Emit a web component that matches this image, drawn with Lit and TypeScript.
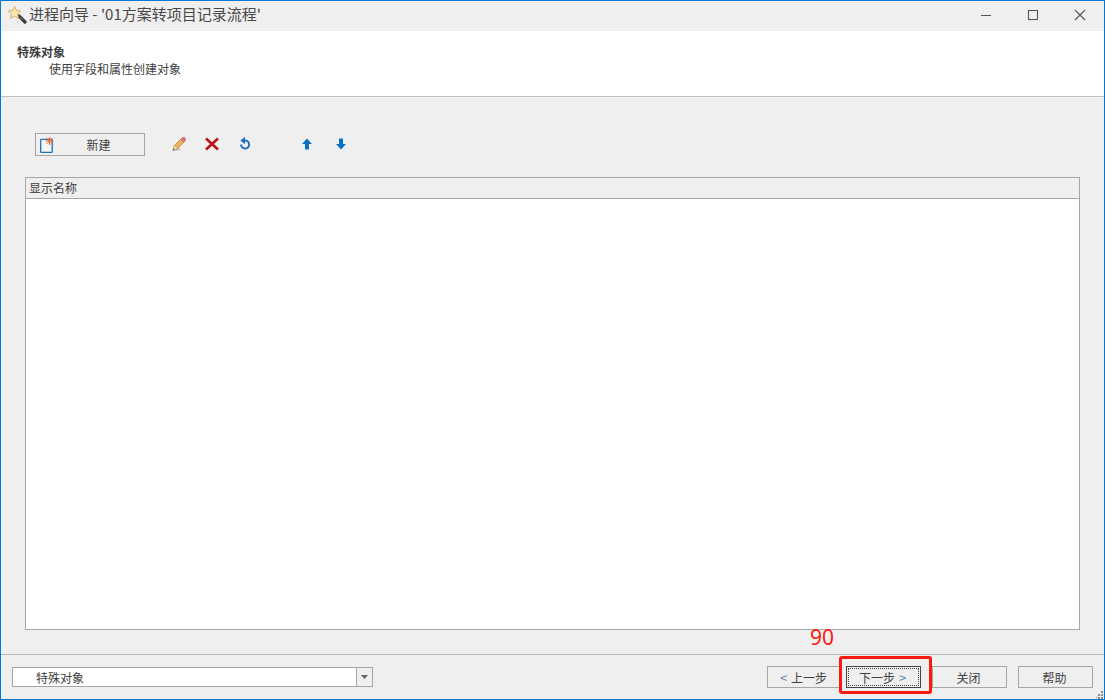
import { LitElement, html, css } from "lit";
import { customElement } from "lit/decorators.js";

@customElement("app-root")
export class AppRoot extends LitElement {
  static styles = css`
    :host { display: block; width: 1105px; height: 700px; }
    * { box-sizing: border-box; }
    .win {
      position: relative; width: 1105px; height: 700px; display: flex; flex-direction: column;
      border: 1px solid #0078d7; background: #efefef; overflow: hidden;
      font-family: "Noto Sans CJK SC", "Liberation Sans", sans-serif; font-size: 12px; color: #404040;
    }
    .title { height: 30px; flex: none; display: flex; align-items: center; padding-left: 7px; }
    .title svg.app { margin-right: 2px; margin-top: -2px; }
    .title .t { font-size: 15px; color: #484848; flex: 1; white-space: nowrap; padding-bottom: 5px; }
    .ctl { width: 47px; height: 30px; display: flex; align-items: center; justify-content: center; padding-bottom: 2px; padding-right: 2px; }
    .hdr { height: 66px; flex: none; background: #fff; border-bottom: 1px solid #c0c0c0; padding: 13px 0 0 16px; }
    .hdr b { display: block; font-size: 12px; font-weight: 700; color: #3a3a3a; line-height: 15px; }
    .hdr span { display: block; margin-left: 32px; line-height: 18px; margin-top: 1px; }
    .main { flex: 1; display: flex; flex-direction: column; padding: 36px 24px 24px 24px; min-height: 0; }
    .bar { display: flex; align-items: center; height: 23px; margin-left: 10px; }
    .new { width: 110px; height: 23px; border: 1px solid #a6a6a6; display: flex; align-items: center; padding-left: 4px; }
    .new span { flex: 1; text-align: center; padding-right: 2px; }
    .ic { width: 16px; height: 16px; display: block; flex: none; margin-top: -2px; }
    .ic.pg { width: 15px; margin-top: 0; }
    .i1 { margin-left: 26px; }
    .i2 { margin-left: 17px; }
    .i3 { margin-left: 46px; }
    .i4 { margin-left: 18px; }
    .list { flex: 1; margin-top: 21px; border: 1px solid #a6a6a6; background: #fff; display: flex; flex-direction: column; }
    .lh { height: 21px; background: #efefef; border-bottom: 1px solid #a6a6a6; padding-left: 3px; line-height: 20px; }
    .foot { height: 45px; flex: none; border-top: 1px solid #b9b9b9; display: flex; align-items: flex-start; padding: 12px 11px 0 11px; }
    .combo { width: 361px; height: 20px; border: 1px solid #a6a6a6; background: #fff; display: flex; }
    .combo span { flex: 1; padding-left: 23px; line-height: 20px; }
    .arrow { width: 16px; border-left: 1px solid #a6a6a6; background: #efefef; display: flex; align-items: center; justify-content: center; }
    .sp { flex: 1; }
    .btn { width: 75px; height: 22px; border: 1px solid #a6a6a6; background: #efefef; display: flex; align-items: center; justify-content: center; white-space: pre; margin-top: -1px; line-height: 21px; padding-right: 2px; }
    .btn.def { border-color: #444; padding: 1px; margin-left: 4px; margin-right: 11px; }
    .btn.def i { flex: 1; align-self: stretch; border: 1px dotted #444; font-style: normal; display: flex; align-items: center; justify-content: center; white-space: pre; padding-right: 2px; }
    .gt { color: #5f86ad; font-size: 13px; }
    .gt.l { margin-right: 4px; }
    .gt.r { margin-left: 4px; }
    .m { margin-left: 11px; }
    .mark { position: absolute; left: 838px; top: 655px; width: 93px; height: 38px; border: 3px solid #fb1a10; border-radius: 3px; }
    .num { position: absolute; left: 809px; top: 622px; font-family: "Noto Sans", sans-serif; font-size: 21px; line-height: 28px; color: #fb1a10; }
    .grip { position: absolute; right: 0; bottom: 0; }
  `;

  render() {
    return html`<div class="win">
      <div class="title">
        <svg class="app" width="19" height="18" viewBox="0 0 19 18">
          <path d="M11 10l6 6" stroke="#3a3a3a" stroke-width="3.200" stroke-linecap="round"/>
          <path d="M12.500 11.500l2 2" stroke="#9a9a9a" stroke-width="1"/>
          <path d="M6.500 .6l1.900 3.800 4.300.6-3.100 3 .8 4.300-3.900-2-3.900 2 .8-4.300-3.100-3 4.300-.6z" fill="#f6e8ae" stroke="#dcb06a" stroke-width="1"/>
        </svg>
        <div class="t">进程向导 - '01方案转项目记录流程'</div>
        <div class="ctl"><svg width="12" height="12"><path d="M1 6.500h10" stroke="#555"/></svg></div>
        <div class="ctl"><svg width="12" height="12"><rect x="1.500" y="1.500" width="9" height="9" fill="none" stroke="#555" stroke-width="1.100"/></svg></div>
        <div class="ctl"><svg width="12" height="12"><path d="M1 1l10 10M11 1L1 11" stroke="#555" stroke-width="1.100"/></svg></div>
      </div>
      <div class="hdr"><b>特殊对象</b><span>使用字段和属性创建对象</span></div>
      <div class="main">
        <div class="bar">
          <div class="new">
            <svg class="ic pg" viewBox="0 0 15 16">
              <rect x=".7" y="3" width="11.500" height="13" rx=".6" fill="#f4f4f4" stroke="#1a74b8" stroke-width="1.300" transform="translate(0,-.6)"/>
              <path d="M9.500 0v8M5.500 4h8M6.700 1.200l5.600 5.600M12.300 1.200L6.700 6.800" stroke="#f4622a" stroke-width="1"/>
            </svg>
            <span>新建</span>
          </div>
          <svg class="ic i1" viewBox="0 0 16 16">
            <path d="M1 15.500l10-2-7-3z" fill="#999" opacity=".55"/>
            <path d="M2 14l1-4 8-8 3 3-8 8z" fill="#eeb25a" stroke="#a87a34" stroke-width=".7"/>
            <path d="M2 14l1-4 3 3z" fill="#f4e0b8"/><path d="M2 14l.5-1.800 1.300 1.300z" fill="#333"/>
            <circle cx="12.600" cy="3.400" r="2.300" fill="#d9707a"/>
          </svg>
          <svg class="ic i2" viewBox="0 0 16 16">
            <path d="M2 2.500l12 11M14 2.500l-12 11" stroke="#b5121b" stroke-width="2.600"/>
          </svg>
          <svg class="ic i2" viewBox="0 0 16 16">
            <path d="M6.500 4.600h2a4 4 0 1 1-4.400 4" fill="none" stroke="#1f6fc0" stroke-width="2"/>
            <path d="M8 .8v7.400L3.400 4.500z" fill="#1f6fc0"/>
          </svg>
          <svg class="ic i3" viewBox="0 0 16 16">
            <path d="M8 2.500L13 8H10v5.500H6V8H3z" fill="#0a72c4"/>
          </svg>
          <svg class="ic i4" viewBox="0 0 16 16">
            <path d="M8 13.500L13 8H10V2.500H6V8H3z" fill="#0a72c4"/>
          </svg>
        </div>
        <div class="list"><div class="lh">显示名称</div></div>
      </div>
      <div class="foot">
        <div class="combo"><span>特殊对象</span><div class="arrow"><svg width="9" height="6"><path d="M1 1h7L4.500 5z" fill="#666"/></svg></div></div>
        <div class="sp"></div>
        <div class="btn"><span class="gt l">&lt;</span>上一步</div>
        <div class="btn def"><i>下一步<span class="gt r">&gt;</span></i></div>
        <div class="btn">关闭</div>
        <div class="btn m">帮助</div>
      </div>
      <div class="num">90</div>
      <div class="mark"></div>
      <svg class="grip" width="8" height="8"><path d="M5 0h2v2H5zM2 3h2v2H2zM5 3h2v2H5zM0 6h1v1H0zM2 6h2v2H2zM5 6h2v2H5z" fill="#888"/></svg>
    </div>`;
  }
}
